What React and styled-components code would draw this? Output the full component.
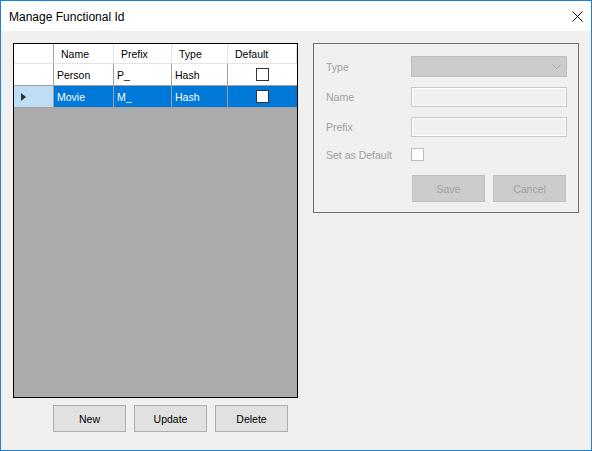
import React from "react";
import styled, { createGlobalStyle } from "styled-components";

const GlobalStyle = createGlobalStyle`
  html, body {
    margin: 0;
    padding: 0;
    background: #ffffff;
  }
  * {
    box-sizing: border-box;
  }
`;

const Window = styled.div`
  width: 592px;
  height: 451px;
  border: 1px solid #1883d7;
  display: flex;
  flex-direction: column;
  font-family: "Liberation Sans", Arial, sans-serif;
  background: #f0f0f0;
`;

const TitleBar = styled.div`
  height: 30px;
  flex: none;
  background: #ffffff;
  display: flex;
  align-items: center;
  justify-content: space-between;
  padding: 0 8px 0 8px;
`;

const Caption = styled.span`
  font-size: 12px;
  color: #000000;
  margin-top: 1px;
`;

const CloseButton = styled.div`
  width: 12px;
  height: 12px;
  display: flex;
  align-items: center;
  justify-content: center;
  margin-right: 0;
`;

const Body = styled.div`
  flex: 1;
  display: flex;
  align-items: flex-start;
  padding: 12px 0 0 12px;
  gap: 15px;
`;

const LeftColumn = styled.div`
  display: flex;
  flex-direction: column;
  gap: 7px;
`;

const Grid = styled.div`
  width: 285px;
  height: 355px;
  border: 1px solid #000000;
  background: #ababab;
  display: grid;
  grid-template-columns: 40px 60px 58px 56px 69px;
  grid-auto-rows: 22px;
  grid-template-rows: 20px;
  align-content: start;
  font-size: 10.5px;
`;

const HeaderCell = styled.div`
  background: #ffffff;
  border-right: 1px solid ${(p) => (p.$first ? "#a0a0a0" : "#e3e3e3")};
  border-bottom: 1px solid #e3e3e3;
  padding-left: 7px;
  display: flex;
  align-items: center;
  color: #000000;
  &:last-child {
    border-right: none;
  }
`;

const RowHeader = styled.div`
  background: ${(p) => (p.$selected ? "#bfddf5" : "#ffffff")};
  border-right: 1px solid #a0a0a0;
  border-bottom: 1px solid #a0a0a0;
  display: flex;
  align-items: center;
  padding-left: 7px;
`;

const Arrow = styled.span`
  width: 0;
  height: 0;
  border-top: 4px solid transparent;
  border-bottom: 4px solid transparent;
  border-left: 5px solid #333333;
`;

const Cell = styled.div`
  background: ${(p) => (p.$selected ? "#0078d7" : "#ffffff")};
  color: ${(p) => (p.$selected ? "#ffffff" : "#000000")};
  border-right: 1px solid #a0a0a0;
  border-bottom: 1px solid #a0a0a0;
  display: flex;
  align-items: center;
  justify-content: ${(p) => (p.$center ? "center" : "flex-start")};
  padding-left: ${(p) => (p.$center ? "0" : "3px")};
  &:nth-child(5n) {
    border-right: none;
  }
`;

const GridCheck = styled.span`
  width: 13px;
  height: 13px;
  border: 1px solid #333333;
  background: #ffffff;
`;

const ButtonRow = styled.div`
  display: flex;
  gap: 8px;
  padding-left: 40px;
`;

const Button = styled.button`
  width: 73px;
  height: 27px;
  font-family: "Liberation Sans", Arial, sans-serif;
  font-size: 10.5px;
  background: ${(p) => (p.disabled ? "#cccccc" : "#e1e1e1")};
  border: 1px solid ${(p) => (p.disabled ? "#bfbfbf" : "#adadad")};
  color: ${(p) => (p.disabled ? "#a0a0a0" : "#000000")};
  padding: 0;
  margin: 0;
`;

const GroupBox = styled.div`
  width: 266px;
  height: 170px;
  border: 1px solid #6e6e6e;
  padding: 12px 0 0 12px;
  display: flex;
  flex-direction: column;
`;

const FieldRow = styled.div`
  display: flex;
  align-items: center;
  height: ${(p) => p.$h}px;
  margin-bottom: ${(p) => p.$gap}px;
`;

const Label = styled.span`
  width: 85px;
  font-size: 10.5px;
  color: #a0a0a0;
`;

const Combo = styled.div`
  width: 156px;
  height: 21px;
  background: #cccccc;
  border: 1px solid #bfbfbf;
  display: flex;
  align-items: center;
  justify-content: flex-end;
  padding-right: 5px;
`;

const TextBox = styled.div`
  width: 156px;
  height: 20px;
  background: #f0f0f0;
  border: 1px solid #c8c8c8;
  box-shadow: inset 0 0 0 1px #ffffff;
`;

const CheckBox = styled.span`
  width: 13px;
  height: 13px;
  background: #ffffff;
  border: 1px solid #bcbcbc;
`;

const FormButtons = styled.div`
  display: flex;
  gap: 8px;
  padding-left: 86px;
`;

const rows = [
  { name: "Person", prefix: "P_", type: "Hash", selected: false },
  { name: "Movie", prefix: "M_", type: "Hash", selected: true },
];

export default function App() {
  return (
    <>
      <GlobalStyle />
      <Window>
        <TitleBar>
          <Caption>Manage Functional Id</Caption>
          <CloseButton>
            <svg width="11" height="11" viewBox="0 0 11 11">
              <path d="M0.5 0.5 L10.5 10.5 M10.5 0.5 L0.5 10.5" stroke="#000" strokeWidth="1" fill="none" />
            </svg>
          </CloseButton>
        </TitleBar>
        <Body>
          <LeftColumn>
            <Grid>
              <HeaderCell $first />
              <HeaderCell>Name</HeaderCell>
              <HeaderCell>Prefix</HeaderCell>
              <HeaderCell>Type</HeaderCell>
              <HeaderCell>Default</HeaderCell>
              {rows.map((r) => (
                <React.Fragment key={r.name}>
                  <RowHeader $selected={r.selected}>{r.selected && <Arrow />}</RowHeader>
                  <Cell $selected={r.selected}>{r.name}</Cell>
                  <Cell $selected={r.selected}>{r.prefix}</Cell>
                  <Cell $selected={r.selected}>{r.type}</Cell>
                  <Cell $selected={r.selected} $center>
                    <GridCheck />
                  </Cell>
                </React.Fragment>
              ))}
            </Grid>
            <ButtonRow>
              <Button>New</Button>
              <Button>Update</Button>
              <Button>Delete</Button>
            </ButtonRow>
          </LeftColumn>
          <GroupBox>
            <FieldRow $h={21} $gap={10}>
              <Label>Type</Label>
              <Combo>
                <svg width="9" height="5" viewBox="0 0 9 5">
                  <path d="M0.5 0.5 L4.5 4.5 L8.5 0.5" stroke="#a8a8a8" strokeWidth="1" fill="none" />
                </svg>
              </Combo>
            </FieldRow>
            <FieldRow $h={20} $gap={10}>
              <Label>Name</Label>
              <TextBox />
            </FieldRow>
            <FieldRow $h={20} $gap={11}>
              <Label>Prefix</Label>
              <TextBox />
            </FieldRow>
            <FieldRow $h={13} $gap={14}>
              <Label>Set as Default</Label>
              <CheckBox />
            </FieldRow>
            <FormButtons>
              <Button disabled>Save</Button>
              <Button disabled>Cancel</Button>
            </FormButtons>
          </GroupBox>
        </Body>
      </Window>
    </>
  );
}
